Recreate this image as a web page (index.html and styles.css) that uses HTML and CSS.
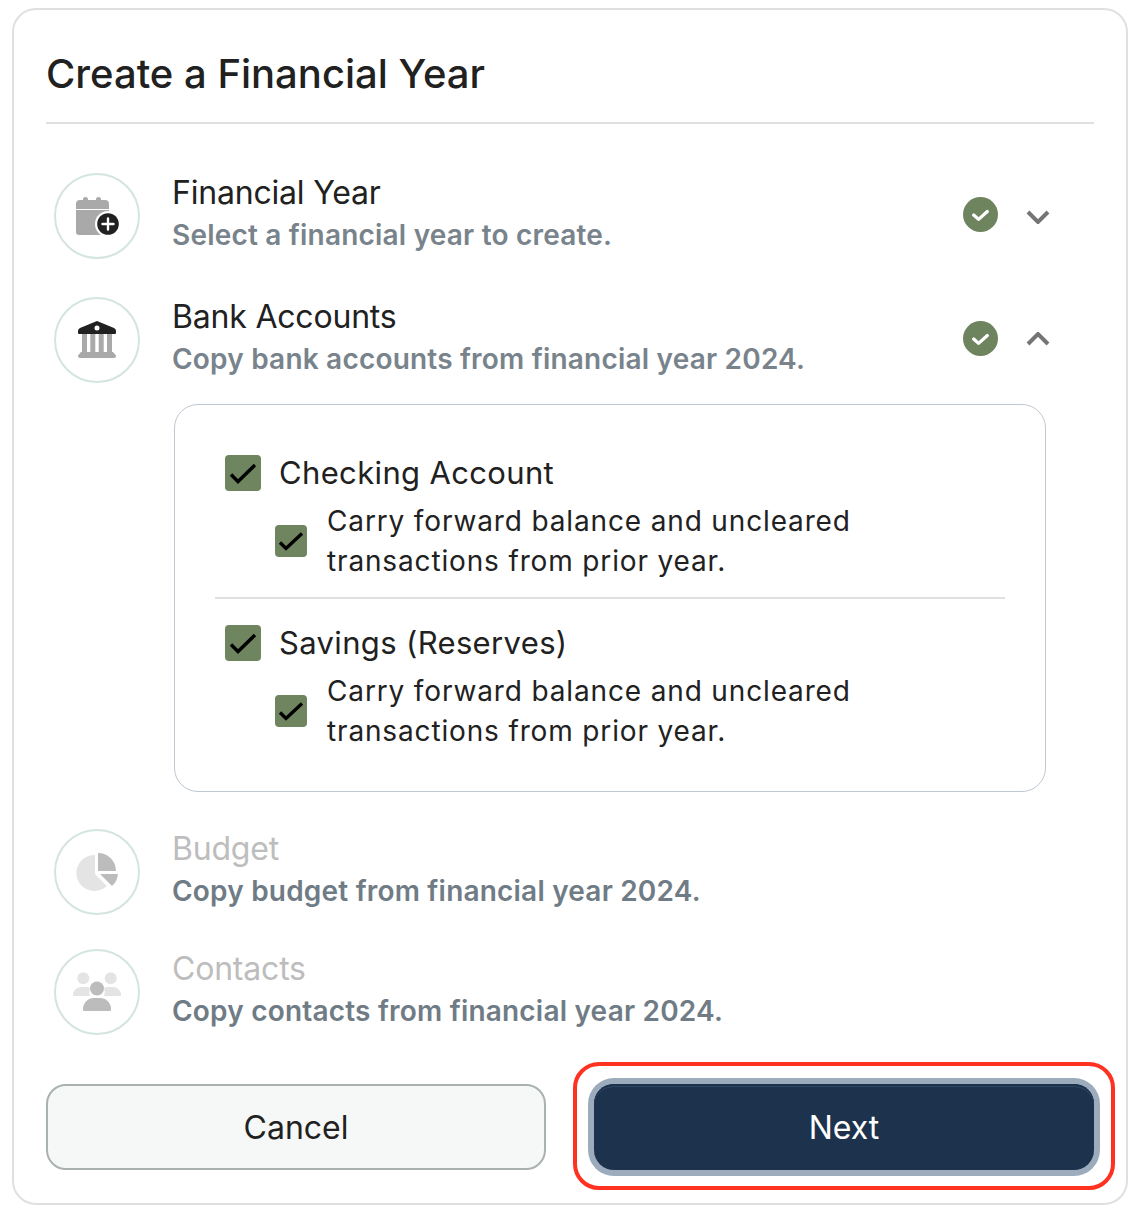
FILE: index.html
```html
<!DOCTYPE html>
<html lang="en">
<head>
<meta charset="utf-8">
<title>Create a Financial Year</title>
<link rel="stylesheet" href="styles.css">
</head>
<body>
<main class="card">
  <header class="card-head"><h1>Create a Financial Year</h1></header>

  <section class="step">
    <div class="step-icon">
      <svg viewBox="0 0 86 86" width="86" height="86">
        <path fill="#a9a9a9" d="M22 31a4 4 0 0 1 4-4h3v-.500a2.500 2.500 0 0 1 5 0v.500h8v-.500a2.500 2.500 0 0 1 5 0v.500h4a4 4 0 0 1 4 4v5H22z"/>
        <path fill="#a9a9a9" d="M22 37h33v25H25a3 3 0 0 1-3-3z"/>
        <circle cx="54" cy="51" r="13" fill="#fff"/>
        <circle cx="54" cy="51" r="10.800" fill="#212121"/>
        <path stroke="#fff" stroke-width="2.400" stroke-linecap="round" d="M54 45.500v11M48.500 51h11"/>
      </svg>
    </div>
    <div class="step-text">
      <h2>Financial Year</h2>
      <p>Select a financial year to create.</p>
    </div>
    <div class="step-status">
      <svg class="done" viewBox="0 0 36 36" width="35" height="35"><circle cx="18" cy="18" r="18" fill="#6e845e"/><path d="M11 18.500l5 4.500 9-8" fill="none" stroke="#fff" stroke-width="3.400" stroke-linecap="round" stroke-linejoin="round"/></svg>
      <svg class="chev chev-down" viewBox="0 0 24 14" width="24" height="14"><path d="M2 2l10 10L22 2" fill="none" stroke="#757575" stroke-width="4"/></svg>
    </div>
  </section>

  <section class="step">
    <div class="step-icon">
      <svg viewBox="0 0 86 86" width="86" height="86">
        <path fill="#a9a9a9" d="M28 37h5v18h-5zM36.300 37h5v18h-5zM44.700 37h5v18h-5zM53 37h5v18h-5z"/>
        <path fill="#a9a9a9" d="M27 55h32l3 3.500V59a2 2 0 0 1-2 2H26a2 2 0 0 1-2-2v-.500z"/>
        <path fill="#212121" fill-rule="evenodd" d="M43 24l17 7q2 1 2 3v2a1 1 0 0 1-1 1H25a1 1 0 0 1-1-1v-2q0-2 2-3zm0 4.500a2.500 2.500 0 1 0 0 5 2.500 2.500 0 0 0 0-5z"/>
      </svg>
    </div>
    <div class="step-text">
      <h2>Bank Accounts</h2>
      <p>Copy bank accounts from financial year 2024.</p>
    </div>
    <div class="step-status">
      <svg class="done" viewBox="0 0 36 36" width="35" height="35"><circle cx="18" cy="18" r="18" fill="#6e845e"/><path d="M11 18.500l5 4.500 9-8" fill="none" stroke="#fff" stroke-width="3.400" stroke-linecap="round" stroke-linejoin="round"/></svg>
      <svg class="chev chev-up" viewBox="0 0 24 14" width="24" height="14"><path d="M2 12L12 2l10 10" fill="none" stroke="#757575" stroke-width="4"/></svg>
    </div>
  </section>

  <section class="accounts">
    <div class="account">
      <div class="account-name">
        <span class="box box-lg"><svg viewBox="0 0 36 36" width="36" height="36"><path d="M6 19.500l7 7L30 10" fill="none" stroke="#000" stroke-width="3.400"/></svg></span>
        <span class="account-label">Checking Account</span>
      </div>
      <div class="account-opt">
        <span class="box box-sm"><svg viewBox="0 0 32 32" width="32" height="32"><path d="M5 17.500l6 6L27 8.500" fill="none" stroke="#000" stroke-width="3.400"/></svg></span>
        <span>Carry forward balance and uncleared transactions from prior year.</span>
      </div>
    </div>
    <div class="account account-next">
      <div class="account-name">
        <span class="box box-lg"><svg viewBox="0 0 36 36" width="36" height="36"><path d="M6 19.500l7 7L30 10" fill="none" stroke="#000" stroke-width="3.400"/></svg></span>
        <span class="account-label">Savings (Reserves)</span>
      </div>
      <div class="account-opt">
        <span class="box box-sm"><svg viewBox="0 0 32 32" width="32" height="32"><path d="M5 17.500l6 6L27 8.500" fill="none" stroke="#000" stroke-width="3.400"/></svg></span>
        <span>Carry forward balance and uncleared transactions from prior year.</span>
      </div>
    </div>
  </section>

  <section class="step step-off step-budget">
    <div class="step-icon">
      <svg viewBox="0 0 86 86" width="86" height="86">
        <path fill="#e4e4e4" d="M41 26A18 18 0 1 0 52.700 57L41 45z"/>
        <path fill="#bcbcbc" d="M44 24a18 18 0 0 1 18 18H44z"/>
        <path fill="#bcbcbc" d="M46 45h18a18 18 0 0 1-6 12z"/>
      </svg>
    </div>
    <div class="step-text">
      <h2>Budget</h2>
      <p>Copy budget from financial year 2024.</p>
    </div>
  </section>

  <section class="step step-off step-contacts">
    <div class="step-icon">
      <svg viewBox="0 0 86 86" width="86" height="86">
        <circle cx="29.300" cy="29.300" r="6" fill="#e4e4e4"/>
        <circle cx="56.700" cy="29.300" r="6" fill="#e4e4e4"/>
        <path fill="#e4e4e4" d="M19 47a8 8 0 0 1 8-9h6a8 8 0 0 1 3 1 10 10 0 0 0 0 8z"/>
        <path fill="#e4e4e4" d="M67 47a8 8 0 0 0-8-9h-6a8 8 0 0 0-3 1 10 10 0 0 1 0 8z"/>
        <circle cx="43" cy="39.500" r="7" fill="#bcbcbc"/>
        <path fill="#bcbcbc" d="M29 60a11 11 0 0 1 11-11h6a11 11 0 0 1 11 11v1a1 1 0 0 1-1 1H30a1 1 0 0 1-1-1z"/>
      </svg>
    </div>
    <div class="step-text">
      <h2>Contacts</h2>
      <p>Copy contacts from financial year 2024.</p>
    </div>
  </section>

  <footer class="actions">
    <button class="btn btn-cancel" type="button">Cancel</button>
    <div class="next-wrap">
      <button class="btn btn-next" type="button">Next</button>
      <span class="highlight"></span>
    </div>
  </footer>
</main>
</body>
</html>
```

FILE: styles.css
```css
* { box-sizing: border-box; }
html, body { margin: 0; padding: 0; background: #fff; }
body {
  padding: 8px 12px 9px;
  font-family: Inter, "Noto Sans", sans-serif;
  color: #212121;
}
.card {
  height: 1197px;
  border: 2px solid #e0e0e0;
  border-radius: 24px;
  padding: 0 32px;
  background: #fff;
}
.card-head {
  padding: 36px 0 20px;
  border-bottom: 2px solid #e0e0e0;
  margin-bottom: 49px;
}
h1 {
  margin: 0;
  font-size: 40px;
  line-height: 56px;
  font-weight: 500;
}
.step {
  display: flex;
  align-items: center;
  height: 86px;
  padding: 0 44px 0 8px;
  margin-bottom: 38px;
}
.step-icon {
  flex: none;
  width: 86px;
  height: 86px;
  border: 2px solid #d3e5de;
  border-radius: 50%;
  margin-right: 32px;
}
.step-icon svg { display: block; margin: -2px; }
.step-text { flex: 1; padding-bottom: 4px; }
h2 {
  margin: 0;
  font-size: 32px;
  line-height: 42px;
  font-weight: 400;
  letter-spacing: -0.2px;
  color: #212121;
}
.step-text p {
  margin: 0;
  font-size: 28px;
  line-height: 42px;
  font-weight: 600;
  letter-spacing: 0.2px;
  color: #78838c;
}
.step-status { display: flex; align-items: center; gap: 28px; }
.step-status svg { display: block; }
.done { margin-top: -3px; }
.chev-down { margin-top: 2px; }
.chev-up { margin-top: -2px; }
.accounts {
  margin: -17px 48px 37px 128px;
  height: 388px;
  border: 1px solid #c0c8d2;
  border-radius: 24px;
  padding: 44px 40px 0;
}
.account-next {
  border-top: 2px solid #e0e0e0;
  margin-top: 16px;
  padding-top: 20px;
}
.account-name {
  display: flex;
  align-items: center;
  gap: 18px;
  padding-left: 10px;
  height: 48px;
  font-size: 31px;
  letter-spacing: 0.35px;
}
.account-label { padding-bottom: 2px; }
.account-opt {
  display: flex;
  align-items: center;
  gap: 20px;
  padding-left: 60px;
  font-size: 28px;
  line-height: 40px;
  letter-spacing: 0.85px;
  margin-top: 4px;
}
.account-opt > span:last-child { width: 560px; }
.box {
  flex: none;
  display: block;
  background: #6f855f;
  border-radius: 4px;
}
.box svg { display: block; }
.box-lg { width: 36px; height: 36px; }
.box-sm { width: 32px; height: 32px; }
.step-budget { margin-bottom: 34px; }
.step-off h2 { color: #bdbdbd; }
.step-off p { color: #707c85; }
.step-contacts { margin-bottom: 49px; }
.actions {
  display: grid;
  grid-template-columns: 500px 500px;
  gap: 48px;
}
.next-wrap { position: relative; }
.btn {
  display: block;
  width: 100%;
  height: 86px;
  border-radius: 20px;
  font-family: inherit;
  font-size: 32px;
  font-weight: 400;
}
.btn-cancel {
  background: #f6f8f7;
  border: 2px solid #a9b1b1;
  color: #212121;
}
.btn-next {
  background: #1d334d;
  border: 0;
  color: #fff;
  box-shadow: 0 0 0 6px #9cacbd, inset 0 2px 0 #1d334d, inset 0 3px 0 #2f4560;
}
.highlight {
  position: absolute;
  left: -21px;
  right: -21px;
  top: -22px;
  bottom: -20px;
  border: 4px solid #ff3120;
  border-radius: 26px;
  pointer-events: none;
}
```
